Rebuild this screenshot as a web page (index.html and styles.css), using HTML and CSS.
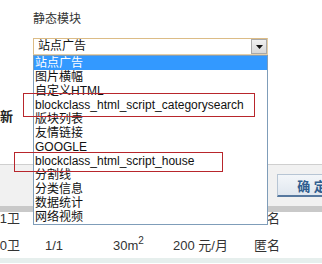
FILE: index.html
```html
<!DOCTYPE html>
<html>
<head>
<meta charset="utf-8">
<link rel="stylesheet" href="styles.css">
</head>
<body>
<div class="page">
  <div class="title">静态模块</div>
  <div class="select">
    <span class="sel-text">站点广告</span>
    <span class="sel-btn"><svg width="7" height="4" viewBox="0 0 7 4"><path d="M0 0H7L3.5 4Z" fill="#111"/></svg></span>
  </div>
  <div class="mid"><span class="new">新</span></div>
  <div class="panel"><button class="ok">确 定</button></div>
  <div class="band"></div>
  <div class="row row-top">
    <span class="c1">1室1厅1卫</span><span class="c2">1/1</span><span>30m<sup>2</sup></span><span>200 元/月</span><span>匿名</span>
  </div>
  <div class="row">
    <span class="c1">1室1厅0卫</span><span class="c2">1/1</span><span>30m<sup>2</sup></span><span>200 元/月</span><span>匿名</span>
  </div>
  <div class="foot"></div>

  <ul class="list">
    <li class="on">站点广告</li>
    <li>图片横幅</li>
    <li>自定义HTML</li>
    <li>blockclass_html_script_categorysearch</li>
    <li>版块列表</li>
    <li>友情链接</li>
    <li>GOOGLE</li>
    <li>blockclass_html_script_house</li>
    <li>分割线</li>
    <li>分类信息</li>
    <li>数据统计</li>
    <li>网络视频</li>
  </ul>
  <div class="mark mark-1"></div>
  <div class="mark mark-2"></div>
</div>
</body>
</html>
```

FILE: styles.css
```css
* { box-sizing: border-box; margin: 0; padding: 0; }
html, body { width: 322px; height: 264px; overflow: hidden; background: #fff; }
body { font-family: "Liberation Sans", "Noto Sans CJK SC", sans-serif; color: #333; }
.page { position: relative; width: 322px; height: 264px; overflow: hidden; }

.title { height: 38px; padding: 11px 0 0 33px; font-size: 12px; line-height: 16px; color: #333; }

.select {
  margin-left: 33px; width: 235px; height: 17px;
  border: 1px solid #dcbc86; border-right-color: #e6cfa6; border-bottom-color: #e6cfa6;
  display: flex; align-items: center; justify-content: space-between; background: #fff;
}
.sel-text { font-size: 12px; line-height: 15px; padding-left: 4px; color: #111; }
.sel-btn {
  width: 16px; height: 15px; background: linear-gradient(#f0f0f0, #d8d8d8);
  border: 1px solid #a9a9a9; display: flex; align-items: center; justify-content: center;
}

.mid { height: 109px; padding-top: 55px; }
.new { display: block; font-size: 13px; font-weight: bold; color: #222; line-height: 14px; }

.panel { height: 42px; border-top: 1px solid #cfcfcf; background: #f1f1f1; padding: 9px 0 0 277px; }
.ok {
  width: 70px; height: 23px; font-family: inherit; font-size: 13px; font-weight: bold; color: #2f5d8e;
  background: linear-gradient(#f3f6f9, #e0e7ef); border: 1px solid #b7c5d4; border-bottom: 2px solid #56789f;
  text-align: center;
}

.band { height: 6px; background: #c9c9c9; }

.row {
  display: grid; grid-template-columns: 20px 93px 60px 81px 1fr;
  height: 22px; align-items: center; font-size: 13px; line-height: 14px; color: #333;
}
.row-top { height: 23px; align-items: start; }
.c1 { display: flex; justify-content: flex-end; overflow: hidden; white-space: nowrap; }
.c2 { padding-left: 25px; }
.row sup { font-size: 10px; line-height: 0; vertical-align: 6px; }

.foot { margin-top: 1px; height: 5px; background: #e6efed; }

.list {
  position: absolute; left: 33px; top: 55px; width: 235px; height: 170px;
  border: 1px solid #7f9db9; background: #fff; list-style: none;
}
.list li { height: 14px; line-height: 14px; font-size: 12px; padding-left: 1px; color: #111; white-space: nowrap; }
.list li.on { background: #3399ff; color: #fff; }

.mark { position: absolute; border: 1px solid #b8262c; }
.mark-1 { left: 23px; top: 93px; width: 232px; height: 24px; }
.mark-2 { left: 14px; top: 152px; width: 209px; height: 20px; }
```
